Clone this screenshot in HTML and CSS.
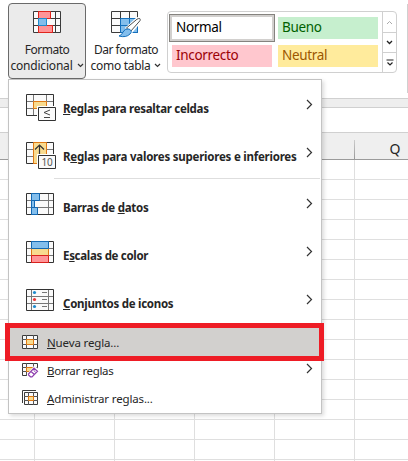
FILE: index.html
```html
<!DOCTYPE html>
<html lang="es">
<head>
<meta charset="utf-8">
<title>Formato condicional</title>
<link rel="stylesheet" href="styles.css">
</head>
<body>
<div class="app">
  <header class="ribbon">
    <button class="big-btn active">
      <svg class="btn-icon" width="30" height="30" viewBox="0 0 30 30" fill="none">
        <path d="M1.5 1.5h27v21h-27zM1.5 8.5h27M1.5 15.5h27M6.5 1.5v21M23.5 1.5v21" fill="#fafafa" stroke="#3b3b3b"/>
        <path d="M6.5 1.5h12v7h-12zM6.5 15.5h14v7h-14z" fill="#ff9497" stroke="#e0241c"/>
        <path d="M6.5 8.5h8v7h-8z" fill="#83beec" stroke="#1e8bcd"/>
      </svg>
      <span class="l1 w1">Formato</span>
      <span class="l2 w2">condicional<svg width="7" height="5" viewBox="0 0 7 5"><path d="M1 1l2.5 2.5L6 1" fill="none" stroke="#333" stroke-width="1.2"/></svg></span>
    </button>
    <button class="big-btn">
      <svg class="btn-icon" width="34" height="30" viewBox="0 0 34 30" fill="none">
        <path d="M2.500 1.500h26v21h-26z" fill="#fafafa"/>
        <path d="M11.500 8.500h17v14h-17z" fill="#83beec"/>
        <path d="M2.500 1.500h26v21h-26zM2.500 8.500h26M2.500 15.500h26M11.500 1.500v21M20.500 1.500v21" stroke="#3b3b3b"/>
        <path d="M11.500 8.500h17v14h-17zM11.500 15.500h17M20.500 8.500v14" stroke="#1470bd"/>
        <path d="M18 18L28 9q4-2 3 2l-9 11z" fill="#fff" stroke="#fff" stroke-width="3"/>
        <path d="M17.500 18L28 9.200q4-2 3 1.500L21.500 21.500z" fill="#fff" stroke="#505050"/>
        <path d="M10 26q3-1 4-4 2-4 6-3 4 2 1 5-4 4-11 2z" fill="#83beec" stroke="#1470bd"/>
      </svg>
      <span class="l1 w3">Dar formato</span>
      <span class="l2 w4">como tabla<svg width="7" height="5" viewBox="0 0 7 5"><path d="M1 1l2.500 2.500L6 1" fill="none" stroke="#333" stroke-width="1.200"/></svg></span>
    </button>
    <section class="gallery">
      <div class="styles">
        <div class="style normal"><span>Normal</span></div>
        <div class="style good"><span>Bueno</span></div>
        <div class="style bad"><span>Incorrecto</span></div>
        <div class="style neutral"><span>Neutral</span></div>
      </div>
      <div class="scroller">
        <span><svg width="7" height="5" viewBox="0 0 7 5"><path d="M1 4l2.500-2.500L6 4" fill="none" stroke="#aaa"/></svg></span>
        <span><svg width="7" height="5" viewBox="0 0 7 5"><path d="M1 1l2.500 2.500L6 1" fill="none" stroke="#222" stroke-width="1.300"/></svg></span>
        <span><svg width="8" height="7" viewBox="0 0 8 7"><path d="M.5 1h7M1.500 3.500L4 6l2.500-2.500" fill="none" stroke="#222" stroke-width="1.200"/></svg></span>
      </div>
    </section>
    <i class="group-line"></i>
  </header>
  <div class="band"></div>
  <div class="formula"></div>
  <div class="columns"><span class="tick"></span><span class="col">Q</span></div>
  <main class="cells"></main>

  <nav class="menu">
    <a class="item large">
      <svg width="30" height="28" viewBox="0 0 30 28" fill="none">
        <path d="M.5.500h27v21H.5z" fill="#fafafa"/><path d="M0 7.500h28M0 14.500h28M7.500 0v22M20.500 0v22" stroke="#777"/>
        <path d="M.5.500h27v21H.5z" stroke="#333"/>
        <path d="M7.500 7.500h13v7h-13z" fill="#f8db8f" stroke="#e07a14"/>
        <path d="M11 12h19v16H11z" fill="#fff"/><path d="M12.500 13.500h17v13h-17z" fill="#fafafa" stroke="#333"/>
        <path d="M24 16l-6 2.500 6 2.500M18 23.500h6" stroke="#444"/>
      </svg>
      <span class="t1"><u>R</u>eglas para resaltar celdas</span>
      <svg class="chev" width="7" height="11" viewBox="0 0 7 11"><path d="M1 1l4.500 4.500L1 10" fill="none" stroke="#333" stroke-width="1.200"/></svg>
    </a>
    <a class="item large">
      <svg width="30" height="28" viewBox="0 0 30 28" fill="none">
        <path d="M.5.500h27v21H.5z" fill="#fafafa"/><path d="M0 7.500h28M0 14.500h28" stroke="#777"/>
        <path d="M.5.500h27v21H.5z" stroke="#333"/>
        <path d="M7.500.500h13v21h-13z" fill="#f8db8f" stroke="#e07a14"/>
        <path d="M13.500 14V3M9 7.500L13.500 3 18 7.500" stroke="#333" stroke-width="1.200"/>
        <path d="M11 12h19v16H11z" fill="#fff"/><path d="M12.500 13.500h17v13h-17z" fill="#fafafa" stroke="#333"/>
        <text class="ten" x="15.500" y="24">10</text>
      </svg>
      <span class="t2">R<u>e</u>glas para valores superiores e inferiores</span>
      <svg class="chev" width="7" height="11" viewBox="0 0 7 11"><path d="M1 1l4.500 4.500L1 10" fill="none" stroke="#333" stroke-width="1.200"/></svg>
    </a>
    <hr>
    <a class="item large">
      <svg width="30" height="28" viewBox="0 0 30 28" fill="none">
        <path d="M.5.500h27v21H.5z" fill="#fafafa"/><path d="M0 7.500h28M0 14.500h28M22.500 0v22" stroke="#777"/>
        <path d="M.5.500h27v21H.5z" stroke="#333"/>
        <path d="M5.500.500h8v7h-8zM5.500 7.500h3v7h-3zM5.500 14.500h6v7h-6z" fill="#83beec" stroke="#1268b3"/>
      </svg>
      <span class="t3">Barras de <u>d</u>atos</span>
      <svg class="chev" width="7" height="11" viewBox="0 0 7 11"><path d="M1 1l4.500 4.500L1 10" fill="none" stroke="#333" stroke-width="1.200"/></svg>
    </a>
    <a class="item large">
      <svg width="30" height="28" viewBox="0 0 30 28" fill="none">
        <path d="M.5.500h27v21H.5z" fill="#fafafa"/><path d="M0 7.500h28M0 14.500h28" stroke="#777"/>
        <path d="M.5.500h27v21H.5z" stroke="#333"/>
        <path d="M5.500 7.500h17v7h-17z" fill="#f8db8f" stroke="#e07a14"/>
        <path d="M5.500.500h17v7h-17z" fill="#83beec" stroke="#1268b3"/>
        <path d="M5.500 14.500h17v7h-17z" fill="#ff9497" stroke="#d8201c"/>
      </svg>
      <span class="t4">E<u>s</u>calas de color</span>
      <svg class="chev" width="7" height="11" viewBox="0 0 7 11"><path d="M1 1l4.500 4.500L1 10" fill="none" stroke="#333" stroke-width="1.200"/></svg>
    </a>
    <a class="item large">
      <svg width="30" height="28" viewBox="0 0 30 28" fill="none">
        <path d="M.5.500h27v21H.5z" fill="#fafafa"/><path d="M0 7.500h28M0 14.500h28M5.500 0v22M22.500 0v22" stroke="#777"/>
        <path d="M.5.500h27v21H.5z" stroke="#333"/>
        <path d="M16 3.500h5M16 10.500h5M16 17.500h5" stroke="#777"/>
        <circle cx="8.500" cy="3.500" r="1.600" fill="#1e8bcd"/><circle cx="8.500" cy="10.500" r="1.600" fill="#ee3535"/><circle cx="8.500" cy="17.500" r="1.600" fill="#1e8bcd"/>
      </svg>
      <span class="t5"><u>C</u>onjuntos de iconos</span>
      <svg class="chev" width="7" height="11" viewBox="0 0 7 11"><path d="M1 1l4.500 4.500L1 10" fill="none" stroke="#333" stroke-width="1.200"/></svg>
    </a>
    <div class="small-items">
      <a class="item small selected">
        <svg width="17" height="16" viewBox="0 0 17 16" fill="none">
          <path d="M.5 1.500h15v13H.5z" fill="#fafafa" stroke="#3b3b3b"/><path d="M0 5.500h16M0 10.500h16M4.500 1v14M11.500 1v14" stroke="#555"/>
          <path d="M4.500 5.500h7v5h-7z" fill="#f8db8f" stroke="#e07a14"/>
        </svg>
        <span class="s1"><u>N</u>ueva regla...</span>
      </a>
      <a class="item small">
        <svg width="17" height="16" viewBox="0 0 17 16" fill="none">
          <path d="M.5 1.500h15v12H.5z" fill="#fafafa" stroke="#3b3b3b"/><path d="M0 5.500h16M0 9.500h16M4.500 1v13M11.500 1v13" stroke="#555"/>
          <path d="M4.500 5.500h7v4h-7z" fill="#f8db8f" stroke="#e07a14"/>
          <path d="M5 12L12 4l5 3v9H5z" fill="#fff"/>
          <path d="M6.500 12L12 6.200l3.500 3-5.500 5.600H8.500L6.500 13zM9 9.500l3.500 3" fill="#fff" stroke="#8e3fae" stroke-width="1.200"/>
          <path d="M11.500 8.200l2 1.800" stroke="#8e3fae"/>
        </svg>
        <span class="s2"><u>B</u>orrar reglas</span>
        <svg class="chev" width="7" height="11" viewBox="0 0 7 11"><path d="M1 1l4.500 4.500L1 10" fill="none" stroke="#333" stroke-width="1.200"/></svg>
      </a>
      <a class="item small">
        <svg width="17" height="16" viewBox="0 0 17 16" fill="none">
          <path d="M.5 13V.500H14" stroke="#3b3b3b"/>
          <path d="M2.500 2.500h13v12h-13z" fill="#fafafa" stroke="#3b3b3b"/><path d="M2 6.500h14M2 10.500h14M6.500 2v13M11.500 2v13" stroke="#555"/>
          <path d="M6.500 6.500h5v4h-5z" fill="#f8db8f" stroke="#e07a14"/>
        </svg>
        <span class="s3"><u>A</u>dministrar reglas...</span>
      </a>
    </div>
    <div class="highlight"></div>
  </nav>
</div>
</body>
</html>
```
FILE: styles.css
```css
* { box-sizing: border-box; }
body { margin: 0; background: #fff; font-family: "Noto Sans", "Open Sans", sans-serif; color: #262626; }
.app { position: relative; width: 408px; height: 461px; overflow: hidden; display: flex; flex-direction: column; }
.app svg { display: block; flex: none; }

.ribbon { height: 98px; flex: none; display: flex; align-items: flex-start; padding: 3px 0 0 8px; }
.big-btn { width: 78px; height: 76px; flex: none; padding: 6px 0 0; border: 1px solid transparent; border-radius: 4px; background: none; font: 12px/16px "Noto Sans", sans-serif; color: #262626; display: flex; flex-direction: column; align-items: center; white-space: nowrap; }
.big-btn.active { background: #ebebeb; border-color: #6a6a6a; }
.big-btn + .big-btn { margin-left: 1px; }
.btn-icon { margin-bottom: 2px; }
.l2 { display: flex; align-items: center; gap: 4px; }
.l2 svg { margin-top: -2px; }
.w1 { letter-spacing: -.5px; }
.w2 { letter-spacing: -.2px; }
.w3 { letter-spacing: -.5px; }
.w4 { letter-spacing: -.3px; }

.gallery { width: 230px; height: 62px; flex: none; margin: 8px 0 0 2px; border: 1px solid #d0d0d0; border-radius: 4px; display: flex; justify-content: space-between; }
.styles { display: grid; grid-template-columns: 100px 100px; grid-auto-rows: 22px; gap: 6px; padding: 5px 0 0 4px; }
.style { padding-left: 4px; font-size: 13.5px; letter-spacing: -.32px; line-height: 20px; white-space: nowrap; }
.normal { background: #fff; color: #000; box-shadow: 0 0 0 2px #d2d0ce, 0 0 0 3px #85837f; }
.good { background: #c6efce; color: #006100; }
.bad { background: #ffc7ce; color: #9c0006; }
.neutral { background: #ffeb9c; color: #9c5700; }
.scroller { width: 14px; border-left: 1px solid #d0d0d0; display: grid; grid-template-rows: 20px 20px 20px; }
.scroller span { display: flex; align-items: center; justify-content: center; }
.scroller span + span { border-top: 1px solid #d0d0d0; }
.group-line { width: 1px; height: 89px; margin: 1px 0 0 auto; background: #d0d0d0; }

.band { height: 10px; flex: none; background: #eee; border: solid #d0d0d0; border-width: 1px 0; }
.formula { height: 24px; flex: none; }
.columns { height: 28px; flex: none; background: #efefef; border-top: 1px solid #d0d0d0; border-bottom: 1px solid #9b9b9b; display: flex; padding-left: 354px; }
.tick { width: 1px; height: 19px; margin-top: 7px; background: linear-gradient(#ccc, #999); }
.col { flex: 1; padding: 6px 0 0 27px; text-align: center; font-size: 14px; line-height: 20px; }
.cells { flex: 1; background: repeating-linear-gradient(to right, transparent 0 34px, #dfdfdf 34px 35px, transparent 35px 80px), repeating-linear-gradient(to bottom, transparent 0 19px, #dfdfdf 19px 20px); }

.menu { position: absolute; left: 8px; top: 79px; width: 314px; height: 335px; background: #fff; border: 1px solid #c3c3c3; box-shadow: 2px 2px 4px rgba(0,0,0,.14); }
.item { display: flex; align-items: center; white-space: nowrap; }
.item .chev { margin-left: auto; margin-right: 8px; }
.large { height: 48px; padding-left: 17px; font-size: 11.5px; font-weight: 700; }
.large > svg:first-child { margin-top: 8px; margin-right: 7px; }
.large > span { margin-top: 9px; }
.t1 { letter-spacing: -.3px; }
.t2 { letter-spacing: -.23px; }
.t3, .t5 { letter-spacing: -.27px; }
.t4 { letter-spacing: -.31px; }
.small { height: 28px; padding-left: 13px; font-size: 11.5px; }
.small > svg:first-child { margin-right: 8px; }
.small .chev { margin-top: -3px; }
.s1 { letter-spacing: -.14px; }
.s2 { letter-spacing: -.35px; }
.s3 { letter-spacing: -.15px; }
.small-items { padding-top: 5px; }
.selected { background: #d2d0ce; }
u { text-decoration: underline 1px; text-underline-offset: 1px; text-decoration-skip-ink: none; }
.menu hr { height: 1px; margin: 2px 1px 0 45px; border: 0; background: #dedede; }
.ten { font: 10px "Noto Sans", sans-serif; fill: #555; letter-spacing: -.2px; }
.highlight { position: absolute; left: -4px; top: 243px; width: 319px; height: 38px; border: 5px solid #ee1c25; }
```
